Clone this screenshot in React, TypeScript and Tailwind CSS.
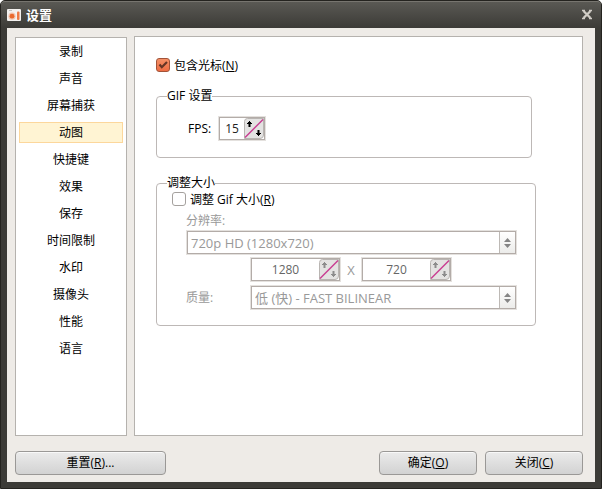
import { useState, type ReactNode } from "react";

const TABS = [
  "录制",
  "声音",
  "屏幕捕获",
  "动图",
  "快捷键",
  "效果",
  "保存",
  "时间限制",
  "水印",
  "摄像头",
  "性能",
  "语言",
];

type SpinBoxProps = {
  id: string;
  label?: string;
  value: string;
  onChange: (value: string) => void;
  disabled?: boolean;
  className: string;
};

function SpinBox({ id, label, value, onChange, disabled, className }: SpinBoxProps) {
  return (
    <div className={`flex border border-[#e4e1de] ${className}`}>
      <div className="flex min-w-0 flex-1 border border-[#b3aca8] bg-white">
        <input
          id={id}
          aria-label={label}
          value={value}
          onChange={(e) => onChange(e.target.value)}
          disabled={disabled}
          className="min-w-0 flex-1 bg-transparent text-center text-[#222] outline-none disabled:text-[#666]"
        />
        <button
          type="button"
          aria-label="调整数值"
          disabled={disabled}
          onClick={() => onChange(String(Number(value) + 1))}
          className="group w-5 shrink-0"
        >
          <svg viewBox="0 0 20 21" className="h-full w-full">
            <path d="M3.500 .5H19.500v16.500a3.500 3.500 0 0 1-3.500 3.500H.5V3.500A3 3 0 0 1 3.500 .5z" fill="#e4e3e2" stroke="#b9b5b2" />
            <path d="M1 19.500 19 1.500" stroke="#c83c91" strokeWidth="1.500" />
            <g className="fill-black group-disabled:fill-[#8c8c8c]">
              <path d="M5 3h1v1h1v1h1v1H6.500v3h-2V6H3V5h1V4h1z" />
              <path d="M14 18h1v-1h1v-1h1v-1h-1.500v-3h-2v3H12v1h1v1h1z" />
            </g>
          </svg>
        </button>
      </div>
    </div>
  );
}

type ComboProps = {
  id: string;
  option: string;
  className: string;
};

function Combo({ id, option, className }: ComboProps) {
  return (
    <div className={`h-[25px] border border-[#e4e1de] ${className}`}>
      <div className="flex h-full border border-[#b3aca8] bg-white">
        <select
          id={id}
          disabled
          className="min-w-0 flex-1 appearance-none bg-transparent pl-[3px] text-[13px] leading-5 text-[#999] opacity-100"
        >
          <option>{option}</option>
        </select>
        <span className="flex w-4 shrink-0 items-center justify-center border-l border-[#bdb9b5] bg-linear-to-b from-white to-[#ececea]">
          <svg viewBox="0 0 7 10" className="h-[10px] w-[7px]" fill="#858585">
            <path d="M3.500 0 7 4H0zM0 6h7L3.500 10z" />
          </svg>
        </span>
      </div>
    </div>
  );
}

type CheckProps = {
  checked: boolean;
  onChange: (checked: boolean) => void;
  children: ReactNode;
};

function Check({ checked, onChange, children }: CheckProps) {
  return (
    <label className="flex h-4 items-center gap-1">
      <span className="grid size-[14px] shrink-0">
        <input
          type="checkbox"
          checked={checked}
          onChange={(e) => onChange(e.target.checked)}
          className="col-start-1 row-start-1 size-[14px] appearance-none rounded-[3px] border border-[#a5a19e] bg-white checked:border-[#a25338] checked:bg-linear-to-b checked:from-[#f49066] checked:to-[#ed6c43]"
        />
        {checked && (
          <svg viewBox="0 0 14 14" className="pointer-events-none col-start-1 row-start-1" fill="none">
            <path d="M3.500 6.500 5.800 9.200 11 4" stroke="#653525" strokeWidth="2.200" />
          </svg>
        )}
      </span>
      <span className="pt-[2px]">{children}</span>
    </label>
  );
}

type DialogButtonProps = {
  text: string;
  hotkey: string;
  suffix?: string;
  className: string;
};

function DialogButton({ text, hotkey, suffix, className }: DialogButtonProps) {
  return (
    <button
      type="button"
      className={`h-6 rounded-[4px] border border-[#9a9896] bg-linear-to-b from-[#ebebeb] to-[#d2d2d2] shadow-[inset_0_1px_0_#f8f8f8] ${className}`}
    >
      {text}(<u>{hotkey}</u>){suffix}
    </button>
  );
}

export default function App() {
  const [tab, setTab] = useState("动图");
  const [cursor, setCursor] = useState(true);
  const [resize, setResize] = useState(false);
  const [fps, setFps] = useState("15");
  const [width, setWidth] = useState("1280");
  const [height, setHeight] = useState("720");

  return (
    <div className="flex min-h-screen flex-col rounded-t-[5px] border border-[#24231f] bg-[#3c3b37] font-['Open_Sans','Noto_Sans_CJK_SC',sans-serif] text-[12px] leading-4 text-black">
      <header className="flex h-[27px] items-center rounded-t-[4px] border-t border-[#77756f] bg-linear-to-b from-[#5a5954] to-[#3c3b37] pr-2 pl-[6px]">
        <svg viewBox="0 0 14 12" className="h-3 w-[14px]">
          <rect width="14" height="12" rx="1" fill="#f3f1ef" />
          <circle cx="5" cy="7.200" r="3.600" fill="#f3c3ae" />
          <circle cx="5" cy="7.200" r="2.400" fill="#ea6a2e" />
          <rect x="10" y="2.500" width="2.500" height="8.500" rx="1" fill="#ee7a46" />
          <rect x="2" y="1" width="3" height="1" fill="#c5c1be" />
        </svg>
        <h1 className="ml-[5px] flex-1 text-[13px] leading-4 font-bold text-white">设置</h1>
        <button type="button" aria-label="关闭窗口" className="text-[#d0ccc5]">
          <svg viewBox="0 0 12 12" className="size-3">
            <path d="M2.500 2 9.500 9M9.500 2 2.500 9" stroke="currentColor" strokeWidth="2.300" />
            <path d="M1 1.500h3M8 1.500h3M1 9.500h3M8 9.500h3" stroke="currentColor" strokeWidth="1.400" />
          </svg>
        </button>
      </header>

      <div className="mx-[6px] mb-[6px] flex flex-1 flex-col bg-[#eeebe7] pt-2 pr-3 pb-[7px] pl-2">
        <div className="flex flex-1 gap-[7px]">
          <nav className="mt-px flex w-28 shrink-0 flex-col gap-[6px] border border-[#b5b2ae] bg-white p-[3px]">
            {TABS.map((name) => (
              <button
                key={name}
                type="button"
                onClick={() => setTab(name)}
                className={`h-[21px] border ${
                  name === tab ? "border-[#fcd79c] bg-[#fff4d3]" : "border-transparent"
                }`}
              >
                {name}
              </button>
            ))}
          </nav>

          <main className="min-w-0 flex-1 border border-[#b5b2ae] bg-white pt-5 pr-[46px] pl-[21px]">
            <Check checked={cursor} onChange={setCursor}>
              包含光标(<u>N</u>)
            </Check>

            <fieldset className="mt-[15px] mr-1 h-[70px] rounded-[4px] border border-[#bdb8b6] pl-[31px]">
              <legend className="-ml-[21px]">GIF 设置</legend>
              <div className="mt-3 flex items-center">
                <label htmlFor="fps" className="w-[30px]">
                  FPS:
                </label>
                <SpinBox id="fps" value={fps} onChange={setFps} className="h-[25px] w-12" />
              </div>
            </fieldset>

            <fieldset className="mt-[17px] h-[151px] rounded-[4px] border border-[#bdb8b6] pr-[18px] pl-[15px]">
              <legend className="-ml-[5px]">调整大小</legend>
              <Check checked={resize} onChange={setResize}>
                调整 Gif 大小(<u>R</u>)
              </Check>
              <div className="mt-[5px] pl-[14px] text-[#999]">
                <label htmlFor="resolution" className="block h-[18px] pt-px">
                  分辨率:
                </label>
                <Combo id="resolution" option="720p HD (1280x720)" className="" />
                <div className="mt-[2px] flex items-center pl-16">
                  <SpinBox id="width" label="宽度" value={width} onChange={setWidth} disabled={!resize} className="h-[25px] w-[91px]" />
                  <span className="w-5 text-center text-[13px]">X</span>
                  <SpinBox id="height" label="高度" value={height} onChange={setHeight} disabled={!resize} className="h-[25px] w-[91px]" />
                </div>
                <div className="mt-[3px] flex items-center">
                  <label htmlFor="quality" className="w-16 shrink-0">
                    质量:
                  </label>
                  <Combo id="quality" option="低 (快) - FAST BILINEAR" className="min-w-0 flex-1" />
                </div>
              </div>
            </fieldset>
          </main>
        </div>

        <footer className="mt-[15px] flex gap-2">
          <DialogButton text="重置" hotkey="R" suffix="..." className="mr-auto w-[151px]" />
          <DialogButton text="确定" hotkey="O" className="w-[98px]" />
          <DialogButton text="关闭" hotkey="C" className="w-[98px]" />
        </footer>
      </div>
    </div>
  );
}
